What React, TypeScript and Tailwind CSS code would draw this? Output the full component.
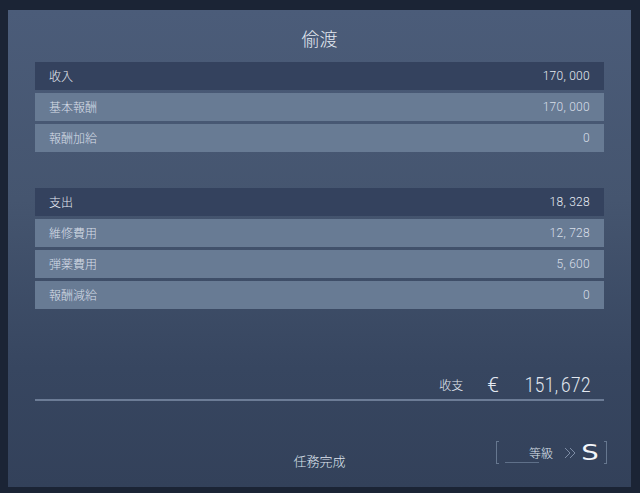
import React from "react";

const font = { fontFamily: '"Noto Sans CJK JP", "Noto Sans CJK SC", "Liberation Sans", sans-serif' };
const numFont = { fontFamily: '"Roboto", "Liberation Sans", sans-serif' };

function Num({ v, className }: { v: string; className?: string }) {
  const parts = v.split(",");
  return (
    <span className={className} style={numFont}>
      {parts.map((p, i) => (
        <React.Fragment key={i}>
          {i > 0 && <span className="mr-[3px]">,</span>}
          {p}
        </React.Fragment>
      ))}
    </span>
  );
}

function Row({ label, value, header }: { label: string; value: string; header?: boolean }) {
  return (
    <div
      className={`flex h-[28px] items-center justify-between pl-[14px] pr-[14px] text-[12px] ${
        header ? "bg-[#34425e] text-[#e6ebf2]" : "bg-[#687b94] text-[#d8dfe9]"
      }`}
    >
      <span className="font-light">{label}</span>
      <Num v={value} className="font-light tracking-[0.3px]" />
    </div>
  );
}

export default function App() {
  return (
    <div className="h-[493px] w-[640px] bg-[#1b2435] pl-[8px] pr-[9px] pt-[10px] pb-[6px]" style={font}>
      <div className="flex h-full w-full flex-col bg-[linear-gradient(180deg,#4b5c79_0%,#45556f_40%,#374660_75%,#33415a_100%)] px-[27px]">
        <div className="flex h-[52px] items-center justify-center pt-[4px] text-[18px] font-light text-[#e3e9f1]">偷渡</div>
        <div className="flex flex-col gap-[3px]">
          <Row label="收入" value="170,000" header />
          <Row label="基本報酬" value="170,000" />
          <Row label="報酬加給" value="0" />
        </div>
        <div className="mt-[36px] flex flex-col gap-[3px]">
          <Row label="支出" value="18,328" header />
          <Row label="維修費用" value="12,728" />
          <Row label="弾薬費用" value="5,600" />
          <Row label="報酬減給" value="0" />
        </div>
        <div className="mt-[64px] flex items-end justify-end pr-[13px] text-[#e3e9f1]">
          <span className="mb-[3px] text-[12px] font-light">收支</span>
          <span className="ml-[24px] text-[21px] font-light leading-[24px]" style={numFont}>€</span>
          <span className="flex w-[92px] justify-end">
            <Num v="151,672" className="inline-block origin-right scale-x-[0.86] text-[20px] font-light leading-[24px] tracking-[0.5px]" />
          </span>
        </div>
        <div className="mt-[2px] h-[2px] bg-[#6c7c96]" />
        <div className="relative mt-[41px] flex h-[24px] items-center justify-center">
          <span className="mt-[13px] text-[13px] font-light text-[#dfe5ee]">任務完成</span>
          <div className="absolute right-[-3px] top-[-1px] flex h-[23px] w-[111px] items-center">
            <div className="h-full w-[3px] border-y border-l border-[#66778f]" />
            <div className="relative flex flex-1 items-center justify-end pr-[7px]">
              <div className="absolute bottom-[1px] left-[6px] h-[1px] w-[34px] bg-[#5f7089]" />
              <span className="text-[12px] font-light text-[#dfe5ee]">等級</span>
              <svg className="ml-[11px]" width="13" height="12" viewBox="0 0 13 12" fill="none" stroke="#7d8ca5" strokeWidth="1">
                <path d="M1 1l5 5-5 5M6 1l5 5-5 5" />
              </svg>
              <span className="ml-[6px] text-[22px] leading-[22px] text-[#f3f6fa] scale-x-[1.25] font-medium" style={{ fontFamily: '"DejaVu Sans", sans-serif' }}>S</span>
            </div>
            <div className="h-full w-[3px] border-y border-r border-[#66778f]" />
          </div>
        </div>
      </div>
    </div>
  );
}
